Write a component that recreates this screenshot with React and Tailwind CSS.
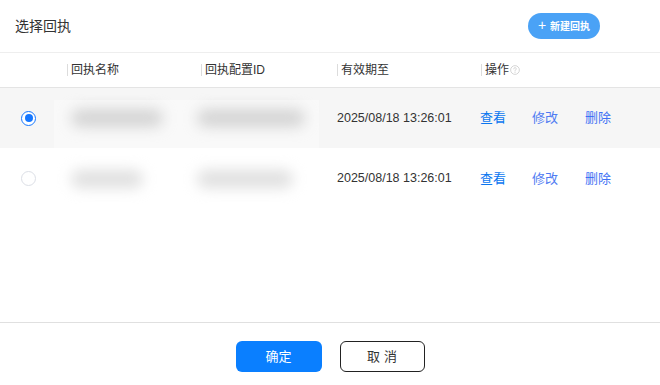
import React from "react";

const font = { fontFamily: '"Liberation Sans", "Noto Sans CJK SC", sans-serif' };

function Sep() {
  return <span className="inline-block w-px h-[12px] bg-[#dcdcdc] mr-[3px]" />;
}

function Radio({ checked }) {
  return checked ? (
    <span className="w-[15px] h-[15px] rounded-full border-[1.5px] border-[#1677ff] flex items-center justify-center bg-white">
      <span className="w-[8px] h-[8px] rounded-full bg-[#1677ff]" />
    </span>
  ) : (
    <span className="w-[15px] h-[15px] rounded-full border border-[#dcdfe6] bg-white" />
  );
}

function Blob({ w, dark }) {
  return (
    <div
      className={`h-[18px] rounded-full blur-[7px] ${dark ? "bg-[#bdbdbd]" : "bg-[#cfcfcf]"}`}
      style={{ width: w }}
    />
  );
}

function Row({ checked, bg, h, b1, b2, dark }) {
  return (
    <div className={`flex items-center ${bg} ${h}`}>
      <div className="w-[67px] flex pl-[21px]">
        <Radio checked={checked} />
      </div>
      <div className="w-[134px] pl-[4px]"><Blob w={b1} dark={dark} /></div>
      <div className="w-[140px] -ml-[4px]"><Blob w={b2} dark={dark} /></div>
      <div className="w-[143px] text-[12.5px] text-[#333]">2025/08/18 13:26:01</div>
      <div className="flex text-[13px]">
        <span className="text-[#0a76f0] w-[52px]">查看</span>
        <span className="text-[#4f7bf2] w-[53px]">修改</span>
        <span className="text-[#3f72f4]">删除</span>
      </div>
    </div>
  );
}

export default function App() {
  return (
    <div className="w-[660px] h-[385px] bg-white flex flex-col relative" style={font}>
      <div className="h-[53px] border-b border-[#eeeeee] flex items-center justify-between pl-[15px] pr-[60px] shrink-0">
        <span className="text-[14px] text-[#333]">选择回执</span>
        <button className="h-[26px] w-[72px] rounded-full bg-[#4aa2f6] text-white text-[10px] font-bold flex items-center justify-center gap-[4px]">
          <span className="text-[14px] font-normal leading-none -mt-[2px]">+</span>
          <span>新建回执</span>
        </button>
      </div>
      <div className="h-[35px] border-b border-[#e4e4e4] flex items-center text-[12px] text-[#333] shrink-0">
        <div className="w-[67px]" />
        <div className="w-[134px] flex items-center"><Sep />回执名称</div>
        <div className="w-[136px] flex items-center"><Sep />回执配置ID</div>
        <div className="w-[144px] flex items-center"><Sep />有效期至</div>
        <div className="flex items-center">
          <Sep />操作
          <svg width="10" height="10" viewBox="0 0 16 16" className="ml-[1px]">
            <circle cx="8" cy="8" r="7" fill="none" stroke="#c8c8c8" strokeWidth="1.2" />
            <path d="M6 6.2a2 2 0 1 1 2.6 1.9c-.4.2-.6.5-.6.9v.6" fill="none" stroke="#c8c8c8" strokeWidth="1.2" strokeLinecap="round" />
            <circle cx="8" cy="11.6" r="0.8" fill="#c8c8c8" />
          </svg>
        </div>
      </div>
      <Row checked dark bg="bg-[#f6f6f6]" h="h-[60px]" b1={92} b2={108} />
      <Row bg="bg-white" h="h-[61px]" b1={72} b2={96} />
      <div className="absolute left-[54px] top-[100px] w-[265px] h-[100px] bg-white/35 pointer-events-none" />
      <div className="flex-1" />
      <div className="h-[63px] border-t border-[#e0e0e0] flex justify-center items-start pt-[18px] gap-[18px] shrink-0">
        <button className="w-[86px] h-[31px] rounded-[6px] bg-[#0a7fff] text-white text-[13px]">确定</button>
        <button className="w-[85px] h-[31px] rounded-[6px] border border-[#222] bg-white text-[#333] text-[13px] tracking-[4px] pl-[4px]">取消</button>
      </div>
    </div>
  );
}
